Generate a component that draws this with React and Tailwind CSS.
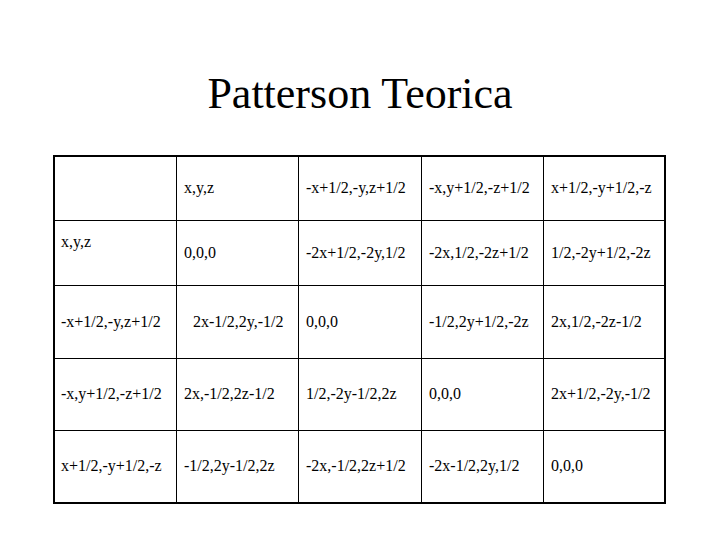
const rows = [
  { h: 'h-[64px]', cells: ['', 'x,y,z', '-x+1/2,-y,z+1/2', '-x,y+1/2,-z+1/2', 'x+1/2,-y+1/2,-z'] },
  { h: 'h-[65px]', cells: ['x,y,z', '0,0,0', '-2x+1/2,-2y,1/2', '-2x,1/2,-2z+1/2', '1/2,-2y+1/2,-2z'] },
  { h: 'h-[73px]', cells: ['-x+1/2,-y,z+1/2', '2x-1/2,2y,-1/2', '0,0,0', '-1/2,2y+1/2,-2z', '2x,1/2,-2z-1/2'] },
  { h: 'h-[72px]', cells: ['-x,y+1/2,-z+1/2', '2x,-1/2,2z-1/2', '1/2,-2y-1/2,2z', '0,0,0', '2x+1/2,-2y,-1/2'] },
  { h: 'h-[71px]', cells: ['x+1/2,-y+1/2,-z', '-1/2,2y-1/2,2z', '-2x,-1/2,2z+1/2', '-2x-1/2,2y,1/2', '0,0,0'] },
];

function cellClass(r, c) {
  const base = ['flex', 'border-black'];
  if (c < 4) base.push('border-r');
  if (r < 4) base.push('border-b');
  // the header of the second row sits near the top of its cell
  if (r === 1 && c === 0) base.push('items-start pt-[12px]');
  else base.push('items-center');
  if (c === 0) base.push('pl-[6px]');
  else if (r === 2 && c === 1) base.push('pl-[16px]');
  else base.push('pl-[7px]');
  return base.join(' ');
}

export default function App() {
  return (
    <div
      className="w-[720px] h-[540px] bg-white text-black overflow-hidden"
      style={{ fontFamily: '"Liberation Serif", "Times New Roman", serif' }}
    >
      <div className="h-[155px] pt-[72px] text-center text-[44px] leading-none">
        Patterson Teorica
      </div>
      <div className="ml-[53px] w-[613px] border-2 border-black grid grid-cols-[122px_122px_123px_122px_120px] text-[16px] leading-[1.15]">
        {rows.map((row, r) =>
          row.cells.map((text, c) => (
            <div key={r + '-' + c} className={cellClass(r, c) + ' ' + row.h}>
              <span className="whitespace-nowrap">{text}</span>
            </div>
          ))
        )}
      </div>
    </div>
  );
}
